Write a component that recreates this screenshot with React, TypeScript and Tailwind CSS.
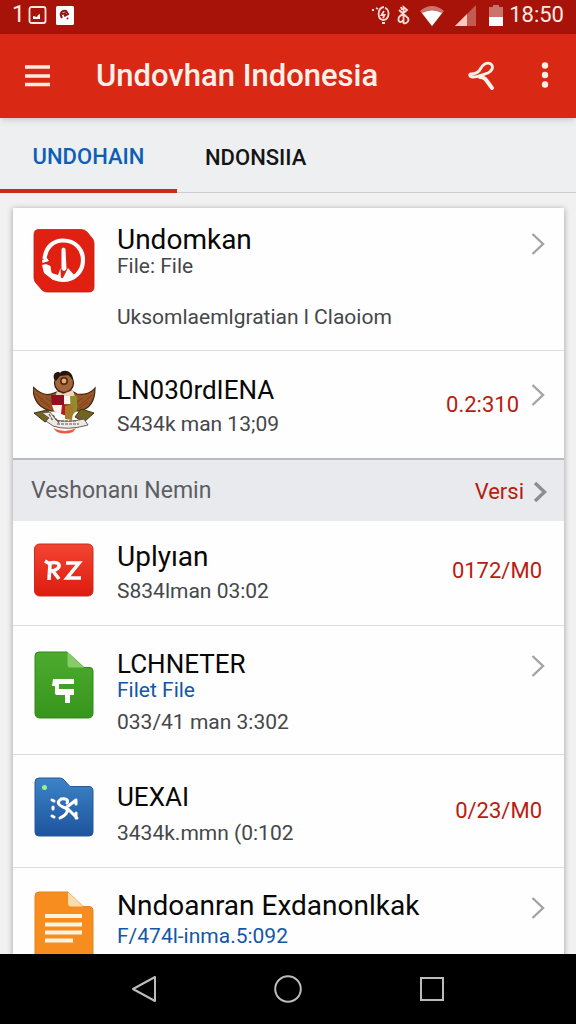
import type { ReactNode } from "react";

function Chevron({ bold = false }: { bold?: boolean }) {
  return (
    <svg className="h-6 w-4 shrink-0" viewBox="0 0 16 24" fill="none" stroke={bold ? "#8c8e92" : "#a3a3a3"} strokeWidth={bold ? 3.4 : 2.4} aria-hidden="true">
      {bold ? <path d="M3 3 L12.500 12 L3 21" /> : <path d="M1.500 2 L12 12 L1.500 22" />}
    </svg>
  );
}

function UndoIcon() {
  return (
    <svg className="h-20 w-16" viewBox="0 0 64 80" aria-hidden="true">
      <path d="M6 5.500 H48 Q52 5.500 54 8 L59 14 Q61 16 61 19 V63 Q61 68 56 68 H14 Q11 68 9 66 L3 59 Q1 57 1 54 V10.500 Q1 5.500 6 5.500Z" fill="#e02010" stroke="#c41d10" strokeWidth="0.800" />
      <path d="M11.500 35 C13 22 21 16.500 30 16.500 C42 16.500 50 25 50 36 C50 48 41 56 30 56 C24 56 19 53 16 49" fill="none" stroke="#fff" strokeWidth="4.200" />
      <path d="M9 36 L14 34 L16 37 L9.500 39Z M9 41 L13 40 L17.500 42 L18.500 49 L25 51 L27.500 44 L28 57 L20 56 L11 49Z M28.500 25 Q30.500 22 32.500 25 L33.500 45 Q31 49 28.500 45Z M35 44 L42 52 L35 57 L28 57 L31 52Z" fill="#fff" />
    </svg>
  );
}

function EmblemIcon() {
  return (
    <svg className="h-20 w-16" viewBox="0 0 64 80" aria-hidden="true">
      <path d="M0 20 C6 26 13 30 21 26 L26 24 H39 L44 27 C51 28 58 26 62 21 C62 34 57 42 46 44 L18 44 C6 41 0 33 0 20Z" fill="#9a5526" stroke="#42230f" strokeWidth="1.200" />
      <path d="M3 27 L17 39 M7 33 L19 42 M59 28 L46 39 M55 35 L44 43 M13 31 L20 36 M50 31 L44 35" stroke="#7a421c" strokeWidth="1" />
      <path d="M1 46 L14 43 L20 50 L12 55 Z M61 46 L48 42 L42 50 L51 55 Z" fill="#73651f" stroke="#3c3515" />
      <circle cx="31" cy="16" r="9.500" fill="#a5653a" stroke="#2d1b12" strokeWidth="1.200" />
      <path d="M21 12 C19 5 26 4 27 6 C30 2 40 3 40 13 L36 8 L27 9 L23 14Z" fill="#23170f" />
      <circle cx="31" cy="14" r="3.200" fill="#e5a873" stroke="#4a2413" strokeWidth="1.500" />
      <path d="M24 24 L30 27 L40 23 L42 30 L22 31Z" fill="#efd3bb" />
      <path d="M18 28 H31 V39 H19Z" fill="#8f1020" />
      <path d="M31 29 H38 V37 H31Z M19 38 H29 V48 L21 44Z" fill="#fff5ed" />
      <path d="M29 38 H37 V50 L28 47Z" fill="#b71c22" />
      <path d="M37 29 H44 V43 L38 50Z" fill="#8b8f2d" />
      <path d="M32 39 L41 37 L39 53 L32 52Z" fill="#a77a29" />
      <path d="M20 61 Q32 67 43 61 L40 65 Q32 68 24 65Z" fill="#f05a38" />
      <path d="M9 46 L17 45 L23 53 Q34 56 51 52 L55 58 Q34 64 20 59 L13 54 L16 51Z" fill="#eee9e2" stroke="#57504a" strokeWidth="0.900" />
      <path d="M16 47 L20 54 M20 48 L26 56 M24 57 L46 57 M24 54 L44 54 M45 49 L53 53" stroke="#67564e" strokeWidth="1.200" strokeDasharray="3 1" />
    </svg>
  );
}

function RzIcon() {
  return (
    <svg className="h-20 w-16" viewBox="0 0 64 80" aria-hidden="true">
      <defs>
        <linearGradient id="rz" x1="0" y1="0" x2="0" y2="1"><stop stopColor="#f34432" /><stop offset="1" stopColor="#dc1c0e" /></linearGradient>
      </defs>
      <rect x="1.500" y="7" width="58.500" height="52" rx="5" fill="url(#rz)" stroke="#c92c1d" />
      <path d="M12 24 L17 27 L16 43 M17 26 C29 23 29 33 18 34 M20 34 L26 42 M33 26 H46 L34 41 H48" fill="none" stroke="#fff" strokeWidth="3.600" />
    </svg>
  );
}

function SheetIcon() {
  return (
    <svg className="h-20 w-16" viewBox="0 0 64 80" aria-hidden="true">
      <defs>
        <linearGradient id="sheet" x1="0" y1="0" x2="0" y2="1"><stop stopColor="#4cab2f" /><stop offset="1" stopColor="#38951c" /></linearGradient>
      </defs>
      <path d="M6 10 H34 L51 25.500 H57 Q60 25.500 60 29 V71 Q60 76 55 76 H7 Q2 76 2 71 V14 Q2 10 6 10Z" fill="url(#sheet)" stroke="#2f8b1b" />
      <path d="M34.500 10 L51 25.500 H37 Q34.500 25.500 34.500 22Z" fill="#8acb69" />
      <path d="M20 37 H41 V42 H26 V47 H41 V53 H37 V61 H32 V53 H23 Q21 51 22 48 V44 H19Z" fill="#fff" />
    </svg>
  );
}

function FolderIcon() {
  return (
    <svg className="h-20 w-16" viewBox="0 0 64 80" aria-hidden="true">
      <defs>
        <linearGradient id="folder" x1="0" y1="0" x2="0" y2="1"><stop stopColor="#3c83c8" /><stop offset="1" stopColor="#1d549d" /></linearGradient>
      </defs>
      <path d="M6 7 H27 Q30 7 32 10 L37 15.500 H56 Q60 15.500 60 20 V61 Q60 65 56 65 H6 Q2 65 2 61 V11 Q2 7 6 7Z" fill="url(#folder)" stroke="#24599b" />
      <circle cx="11.500" cy="16.500" r="2.500" fill="#9cf18a" />
      <path d="M19 29 L21 30 M20 36 V38 M19 45 L21 46 M27 29 C24 31 25 34 30 36 C37 38 35 43 27 47 M28 28 C33 27 36 29 34 32 M34 36 L43 29 M43 29 V33 M35 38 L44 47 M43 42 V47" fill="none" stroke="#fff" strokeWidth="3" strokeLinecap="round" />
    </svg>
  );
}

function DocIcon() {
  return (
    <svg className="h-20 w-16" viewBox="0 0 64 80" aria-hidden="true">
      <path d="M6 8 H35 L50 22.500 H56 Q60 22.500 60 27 V80 H2 V12 Q2 8 6 8Z" fill="#f78c1f" stroke="#e98218" />
      <path d="M35 8 L50 22.500 H38 Q35 22.500 35 19Z" fill="#fbdcac" />
      <path d="M12 32 H49 M12 40.500 H49 M12 48.500 H49 M12 56.500 H40" stroke="#fff3dd" strokeWidth="4" />
    </svg>
  );
}

type RowProps = {
  icon: ReactNode;
  title: string;
  caps?: boolean;
  className: string;
  children: ReactNode;
  trailing: ReactNode;
};

function Row({ icon, title, caps = false, className, children, trailing }: RowProps) {
  return (
    <li className="border-b border-[#dcdddd] last:border-b-0">
      <a href="#" className="flex items-start gap-5 pl-5">
        <span className="-mb-4 shrink-0 pt-4">{icon}</span>
        <span className={`min-w-0 flex-1 ${className}`}>
          <span className={`block leading-7 whitespace-nowrap text-[#080808] ${caps ? "text-[26px]" : "text-[28px]"}`}>{title}</span>
          {children}
        </span>
        {trailing}
      </a>
    </li>
  );
}

function StatusBar() {
  return (
    <div className="flex h-[34px] shrink-0 items-center justify-between bg-[#a81309] px-3 pb-1 text-[#ffe9e4]">
      <div className="flex items-center">
        <span className="text-[23px] leading-7">1</span>
        <svg className="h-5 w-[52px]" viewBox="0 0 52 20" aria-hidden="true">
          <rect x="4.500" y="2" width="16" height="16" rx="2" fill="none" stroke="#ffe9e4" strokeWidth="1.800" />
          <path d="M8 14 H15 V9 L13 10 L12 12 L8 11Z" fill="#fff" />
          <rect x="31" y="1" width="18" height="19" rx="1.500" fill="#fff" />
          <path d="M37 13 C34 8 37 5 41 6 L43 9 L39 11 M37 9 L41 8 M42 13 L43 14" fill="none" stroke="#8f1711" strokeWidth="2" />
        </svg>
      </div>
      <div className="flex items-center gap-1">
        <svg className="h-6 w-[136px]" viewBox="0 0 136 24" aria-hidden="true">
          <g fill="none" stroke="#ffdcd6" strokeWidth="1.800">
            <path d="M15 4 C8 5 8 16 14 17 C21 17 21 6 16 5 M15 8 L12.500 12 H15.500 L14 15 M9 6 L7 5 M13 20 H16" />
            <path d="M3 7 H5" strokeWidth="2" />
            <path d="M30 7 L39 15 C41 19 36 21 34.500 20 V4 L38 7 L30 14 C28 20 33 20 34 17 M32 4 L33 7" />
          </g>
          <path d="M51 8 Q63 -2 75 8 L63 23Z" fill="#ca746d" />
          <path d="M53 10 Q63 5 73 10 L63 23Z" fill="#fff" />
          <path d="M86 23 L107 2 V23Z" fill="#c35b53" />
          <path d="M86 23 L98 11 V23Z" fill="#ffc8c1" />
          <path d="M120 4 H124 V2 H130 V4 H134 V14 H120Z" fill="#c9736b" />
          <path d="M120 14 H134 V23 H120Z" fill="#fff" />
        </svg>
        <span className="text-[22px] leading-7">18:50</span>
      </div>
    </div>
  );
}

export default function App() {
  const sub = "block text-[21px] leading-6 whitespace-nowrap text-[#45474a]";
  const link = "block text-[21px] leading-6 whitespace-nowrap text-[#1457a5]";
  const value = "text-[22px] leading-7 whitespace-nowrap text-[#b81c10]";
  return (
    <div className="flex h-screen flex-col overflow-hidden bg-[#f1f1f2] font-['Roboto',sans-serif]">
      <StatusBar />
      <header className="z-10 flex h-[84px] shrink-0 items-center bg-[#d92915] pr-[25px] pl-6 text-[#fff0ea] shadow-md">
        <button type="button" aria-label="Menu" className="w-[72px]">
          <svg className="h-7 w-7" viewBox="0 0 28 28" stroke="#ffeae2" strokeWidth="3.600" aria-hidden="true">
            <path d="M1 5 H26 M1 14 H26 M1 22.500 H26" />
          </svg>
        </button>
        <h1 className="flex-1 text-[31px] leading-9 font-medium whitespace-nowrap">Undovhan Indonesia</h1>
        <button type="button" aria-label="Share" className="mr-[42px]">
          <svg className="h-8 w-8" viewBox="0 0 32 32" fill="none" stroke="#fff0e8" strokeWidth="2.800" strokeLinecap="round" strokeLinejoin="round" aria-hidden="true">
            <path d="M6 14 C11 14 14 12 16 8 C18 4 22 2 26 4 C29 7 27 11 23 13 C17 15 13 17 8 17 C4 17 4 14 6 14Z" />
            <path d="M15 17 C21 17 22 22 27 28" strokeWidth="4" />
          </svg>
        </button>
        <button type="button" aria-label="More options">
          <svg className="h-8 w-3" viewBox="0 0 12 32" fill="#fff0e8" aria-hidden="true">
            <circle cx="6" cy="5.500" r="3.200" /><circle cx="6" cy="15" r="3.200" /><circle cx="6" cy="24.500" r="3.200" />
          </svg>
        </button>
      </header>
      <nav className="flex h-[75px] shrink-0 border-b border-[#cccdce] bg-[#eeeff0] text-[22px] font-medium">
        <a href="#" className="-mb-px flex w-[177px] items-center justify-center border-b-4 border-[#c92b17] pt-1.5 text-[#0c5fb7]">UNDOHAIN</a>
        <a href="#" className="flex items-center px-7 pt-1 text-[#151515]">NDONSIIA</a>
      </nav>
      <main className="min-h-0 flex-1 overflow-hidden pt-[15px] pr-3 pl-[13px]">
        <div className="bg-[#fefefe] shadow-[0_1px_6px_rgba(0,0,0,0.35)]">
          <ul>
            <Row icon={<UndoIcon />} title="Undomkan" className="pt-[18px] pb-[21px]" trailing={<span className="pt-6 pr-[17px]"><Chevron /></span>}>
              <span className={sub}>File: File</span>
              <span className={`${sub} mt-[27px]`}>Uksomlaemlgratian l Claoiom</span>
            </Row>
            <Row icon={<EmblemIcon />} title="LN030rdIENA" caps className="pt-[25px] pb-[22px]" trailing={
              <span className="flex pt-8 pr-[17px]"><span className={`${value} pt-2 pr-3`}>0.2:310</span><Chevron /></span>
            }>
              <span className={`${sub} mt-2`}>S434k man 13;09</span>
            </Row>
          </ul>
          <div className="flex h-[63px] items-center justify-between border-t-2 border-[#b8babd] bg-[#e9eaed] pt-0.5 pr-4 pl-[18px]">
            <h2 className="text-[23px] text-[#5b5e63]">Veshonanı Nemin</h2>
            <a href="#" className="flex items-center gap-2 text-[22px] text-[#b81c10]">Versi<Chevron bold /></a>
          </div>
          <ul>
            <Row icon={<RzIcon />} title="Uplyıan" className="pt-[22px] pb-[22px]" trailing={<span className={`${value} pt-9 pr-[22px]`}>0172/M0</span>}>
              <span className={`${sub} mt-2`}>S834lman 03:02</span>
            </Row>
            <Row icon={<SheetIcon />} title="LCHNETER" caps className="pt-6 pb-5" trailing={<span className="pt-7 pr-[17px]"><Chevron /></span>}>
              <span className={link}>Filet File</span>
              <span className={`${sub} mt-2`}>033/41 man 3:302</span>
            </Row>
            <Row icon={<FolderIcon />} title="UEXAI" caps className="pt-7 pb-[22px]" trailing={<span className={`${value} pt-[42px] pr-[22px]`}>0/23/M0</span>}>
              <span className={`${sub} mt-2.5`}>3434k.mmn (0:102</span>
            </Row>
            <Row icon={<DocIcon />} title="Nndoanran Exdanonlkak" className="pt-6 pb-6" trailing={<span className="pt-7 pr-[17px]"><Chevron /></span>}>
              <span className={`${link} mt-1`}>F/474l-inma.5:092</span>
            </Row>
          </ul>
        </div>
      </main>
      <footer className="z-10 flex h-[70px] shrink-0 items-center justify-center gap-28 bg-black">
        <button type="button" aria-label="Back">
          <svg className="h-8 w-8" viewBox="0 0 32 32" fill="none" stroke="#bcbcbc" strokeWidth="2" strokeLinejoin="round" aria-hidden="true"><path d="M27 4 V28 L5 16Z" /></svg>
        </button>
        <button type="button" aria-label="Home">
          <svg className="h-8 w-8" viewBox="0 0 32 32" fill="none" stroke="#bcbcbc" strokeWidth="2" aria-hidden="true"><circle cx="16" cy="16" r="12.800" /></svg>
        </button>
        <button type="button" aria-label="Recent apps">
          <svg className="h-8 w-8" viewBox="0 0 32 32" fill="none" stroke="#bcbcbc" strokeWidth="2" aria-hidden="true"><rect x="5" y="5" width="22" height="22" /></svg>
        </button>
      </footer>
    </div>
  );
}
